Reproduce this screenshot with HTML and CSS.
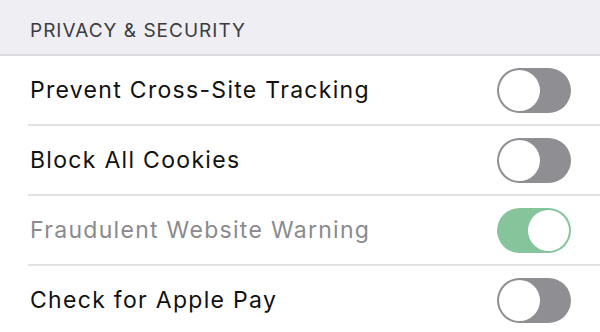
FILE: index.html
```html
<!DOCTYPE html>
<html>
<head>
<meta charset="utf-8">
<link rel="stylesheet" href="styles.css">
</head>
<body>
<div class="header">PRIVACY &amp; SECURITY</div>
<ul class="list">
  <li class="row"><span class="label">Prevent Cross-Site Tracking</span><span class="toggle"><span class="knob"></span></span></li>
  <li class="row"><span class="label">Block All Cookies</span><span class="toggle"><span class="knob"></span></span></li>
  <li class="row"><span class="label dim">Fraudulent Website Warning</span><span class="toggle on"><span class="knob"></span></span></li>
  <li class="row"><span class="label">Check for Apple Pay</span><span class="toggle"><span class="knob"></span></span></li>
</ul>
</body>
</html>
```
FILE: styles.css
```css
html, body {
  margin: 0;
  padding: 0;
  background: #ffffff;
  font-family: Inter, "Noto Sans", sans-serif;
  width: 600px;
  height: 332px;
  overflow: hidden;
}
.header {
  height: 56px;
  box-sizing: border-box;
  background: #eeeef3;
  color: #3c3c40;
  font-size: 19px;
  letter-spacing: 1px;
  padding: 21px 0 0 30px;
  line-height: 20px;
  border-bottom: 2px solid #dcdce0;
}
.list {
  list-style: none;
  margin: 0;
  padding: 0 0 0 28px;
}
.row {
  display: flex;
  align-items: center;
  justify-content: space-between;
  height: 68px;
  border-bottom: 2px solid #e2e2e5;
  padding-right: 29px;
}
.row:last-child {
  border-bottom: none;
}
.label {
  font-size: 23px;
  color: #111;
  padding-left: 2px;
  letter-spacing: 1.3px;
}
.label.dim {
  color: #8a8a8e;
}
.toggle {
  width: 74px;
  height: 45px;
  border-radius: 23px;
  background: #8e8e93;
  box-sizing: border-box;
  padding: 2px;
  display: flex;
  justify-content: flex-start;
}
.toggle.on {
  background: #86c59c;
  justify-content: flex-end;
}
.knob {
  width: 41px;
  height: 41px;
  border-radius: 50%;
  background: #fff;
}
```
